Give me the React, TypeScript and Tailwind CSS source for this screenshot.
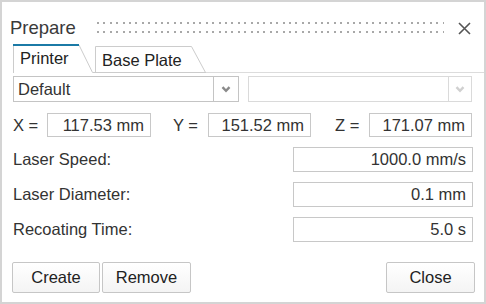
import React from "react";

function Chevron({ color }: { color: string }) {
  return (
    <svg width="10" height="7" viewBox="0 0 10 7">
      <path d="M1.5 1.2 L5 4.8 L8.5 1.2" fill="none" stroke={color} strokeWidth="2.4" />
    </svg>
  );
}

function Combo({
  value,
  width,
  btn,
  disabled,
}: {
  value: string;
  width: string;
  btn: string;
  disabled?: boolean;
}) {
  const border = disabled ? "border-[#dadada]" : "border-[#c4c4c4]";
  return (
    <div className={`flex h-[26px] ${width}`}>
      <div className={`flex-1 border ${border} bg-white flex items-center pl-[4px]`}>{value}</div>
      <div className={`${btn} border border-l-0 ${border} bg-white flex items-center justify-center`}>
        <Chevron color={disabled ? "#d0d0d0" : "#8a8a8a"} />
      </div>
    </div>
  );
}

function Field({ value, className }: { value: string; className: string }) {
  return (
    <div className={`border border-[#c8c8c8] bg-white flex items-center justify-end pr-[6px] ${className}`}>
      {value}
    </div>
  );
}

function Row({ label, value }: { label: string; value: string }) {
  return (
    <div className="flex items-center justify-between h-[25px]">
      <span>{label}</span>
      <Field value={value} className="w-[180px] h-full" />
    </div>
  );
}

const gripCols = Array.from({ length: 55 }, (_, i) => Math.round(i * 6.4));

export default function App() {
  return (
    <div className="w-[486px] h-[304px] bg-white border-2 border-[#d4d4d4] font-['Liberation_Sans',Arial,sans-serif] text-[#333333] text-[16.5px] leading-none flex flex-col">
      {/* title bar */}
      <div className="h-[42px] pt-[10px] pl-[8px] flex items-center">
        <span className="w-[87px] text-[18.5px] text-[#3a3a3a]">Prepare</span>
        <svg width="347" height="12" className="block">
          {gripCols.map((x) => (
            <g key={x}>
              <rect x={x} y={0} width="2" height="2" fill="#a8a8a8" />
              <rect x={x} y={9} width="2" height="2" fill="#a8a8a8" />
            </g>
          ))}
        </svg>
        <svg width="13" height="13" viewBox="0 0 13 13" className="ml-[14px] block">
          <path d="M1 1 L12 12 M12 1 L1 12" stroke="#555555" strokeWidth="1.6" />
        </svg>
      </div>

      {/* tabs */}
      <div className="flex items-end h-[29px] pl-[11px]">
        <div className="relative w-[81px] h-[29px] flex items-center pl-[7px]">
          <svg className="absolute inset-0" width="81" height="29">
            <path d="M0.5 29 V1 M66 1 L79.5 28.5 H81" fill="none" stroke="#cccccc" strokeWidth="1" />
            <path d="M0 1 H66" stroke="#1b7aa6" strokeWidth="2" />
          </svg>
          <span className="relative text-[#222]">Printer</span>
        </div>
        <div className="relative w-[112px] h-[27px] flex items-center pl-[8px] pt-[2px]">
          <svg className="absolute inset-0" width="112" height="27">
            <path d="M1.5 26.5 V0.5 H97.5 L111.5 26.5 M0 26.5 H112" fill="none" stroke="#cccccc" strokeWidth="1" />
          </svg>
          <span className="relative text-[#222]">Base Plate</span>
        </div>
        <div className="flex-1 h-full border-b border-[#dcdcdc]" />
      </div>

      {/* content */}
      <div className="flex-1 flex flex-col pl-[11px] pr-[11px]">
        <div className="flex mt-[3px] pr-[1px]">
          <Combo value="Default" width="w-[226px]" btn="w-[25px]" />
          <div className="w-[9px]" />
          <Combo value="" width="w-[224px]" btn="w-[23px]" disabled />
        </div>

        <div className="flex items-center h-[24px] mt-[11px]">
          <span className="w-[34px]">X =</span>
          <Field value="117.53 mm" className="w-[104px] h-full" />
          <span className="w-[35px] ml-[22px]">Y =</span>
          <Field value="151.52 mm" className="w-[103px] h-full" />
          <span className="w-[34px] ml-[24px]">Z =</span>
          <Field value="171.07 mm" className="w-[103px] h-full" />
        </div>

        <div className="flex flex-col gap-[10px] mt-[10px]">
          <Row label="Laser Speed:" value="1000.0 mm/s" />
          <Row label="Laser Diameter:" value="0.1 mm" />
          <Row label="Recoating Time:" value="5.0 s" />
        </div>

        <div className="flex h-[31px] mt-[20px] ml-[-1px] mr-[-2px]">
          <button className="w-[88px] h-full border border-[#c6c6c6] rounded-[2px] bg-gradient-to-b from-white to-[#f4f4f4] text-[#222]">
            Create
          </button>
          <button className="w-[89px] h-full ml-[2px] border border-[#c6c6c6] rounded-[2px] bg-gradient-to-b from-white to-[#f4f4f4] text-[#222]">
            Remove
          </button>
          <button className="w-[89px] h-full ml-auto border border-[#c6c6c6] rounded-[2px] bg-gradient-to-b from-white to-[#f4f4f4] text-[#222]">
            Close
          </button>
        </div>
      </div>
    </div>
  );
}
